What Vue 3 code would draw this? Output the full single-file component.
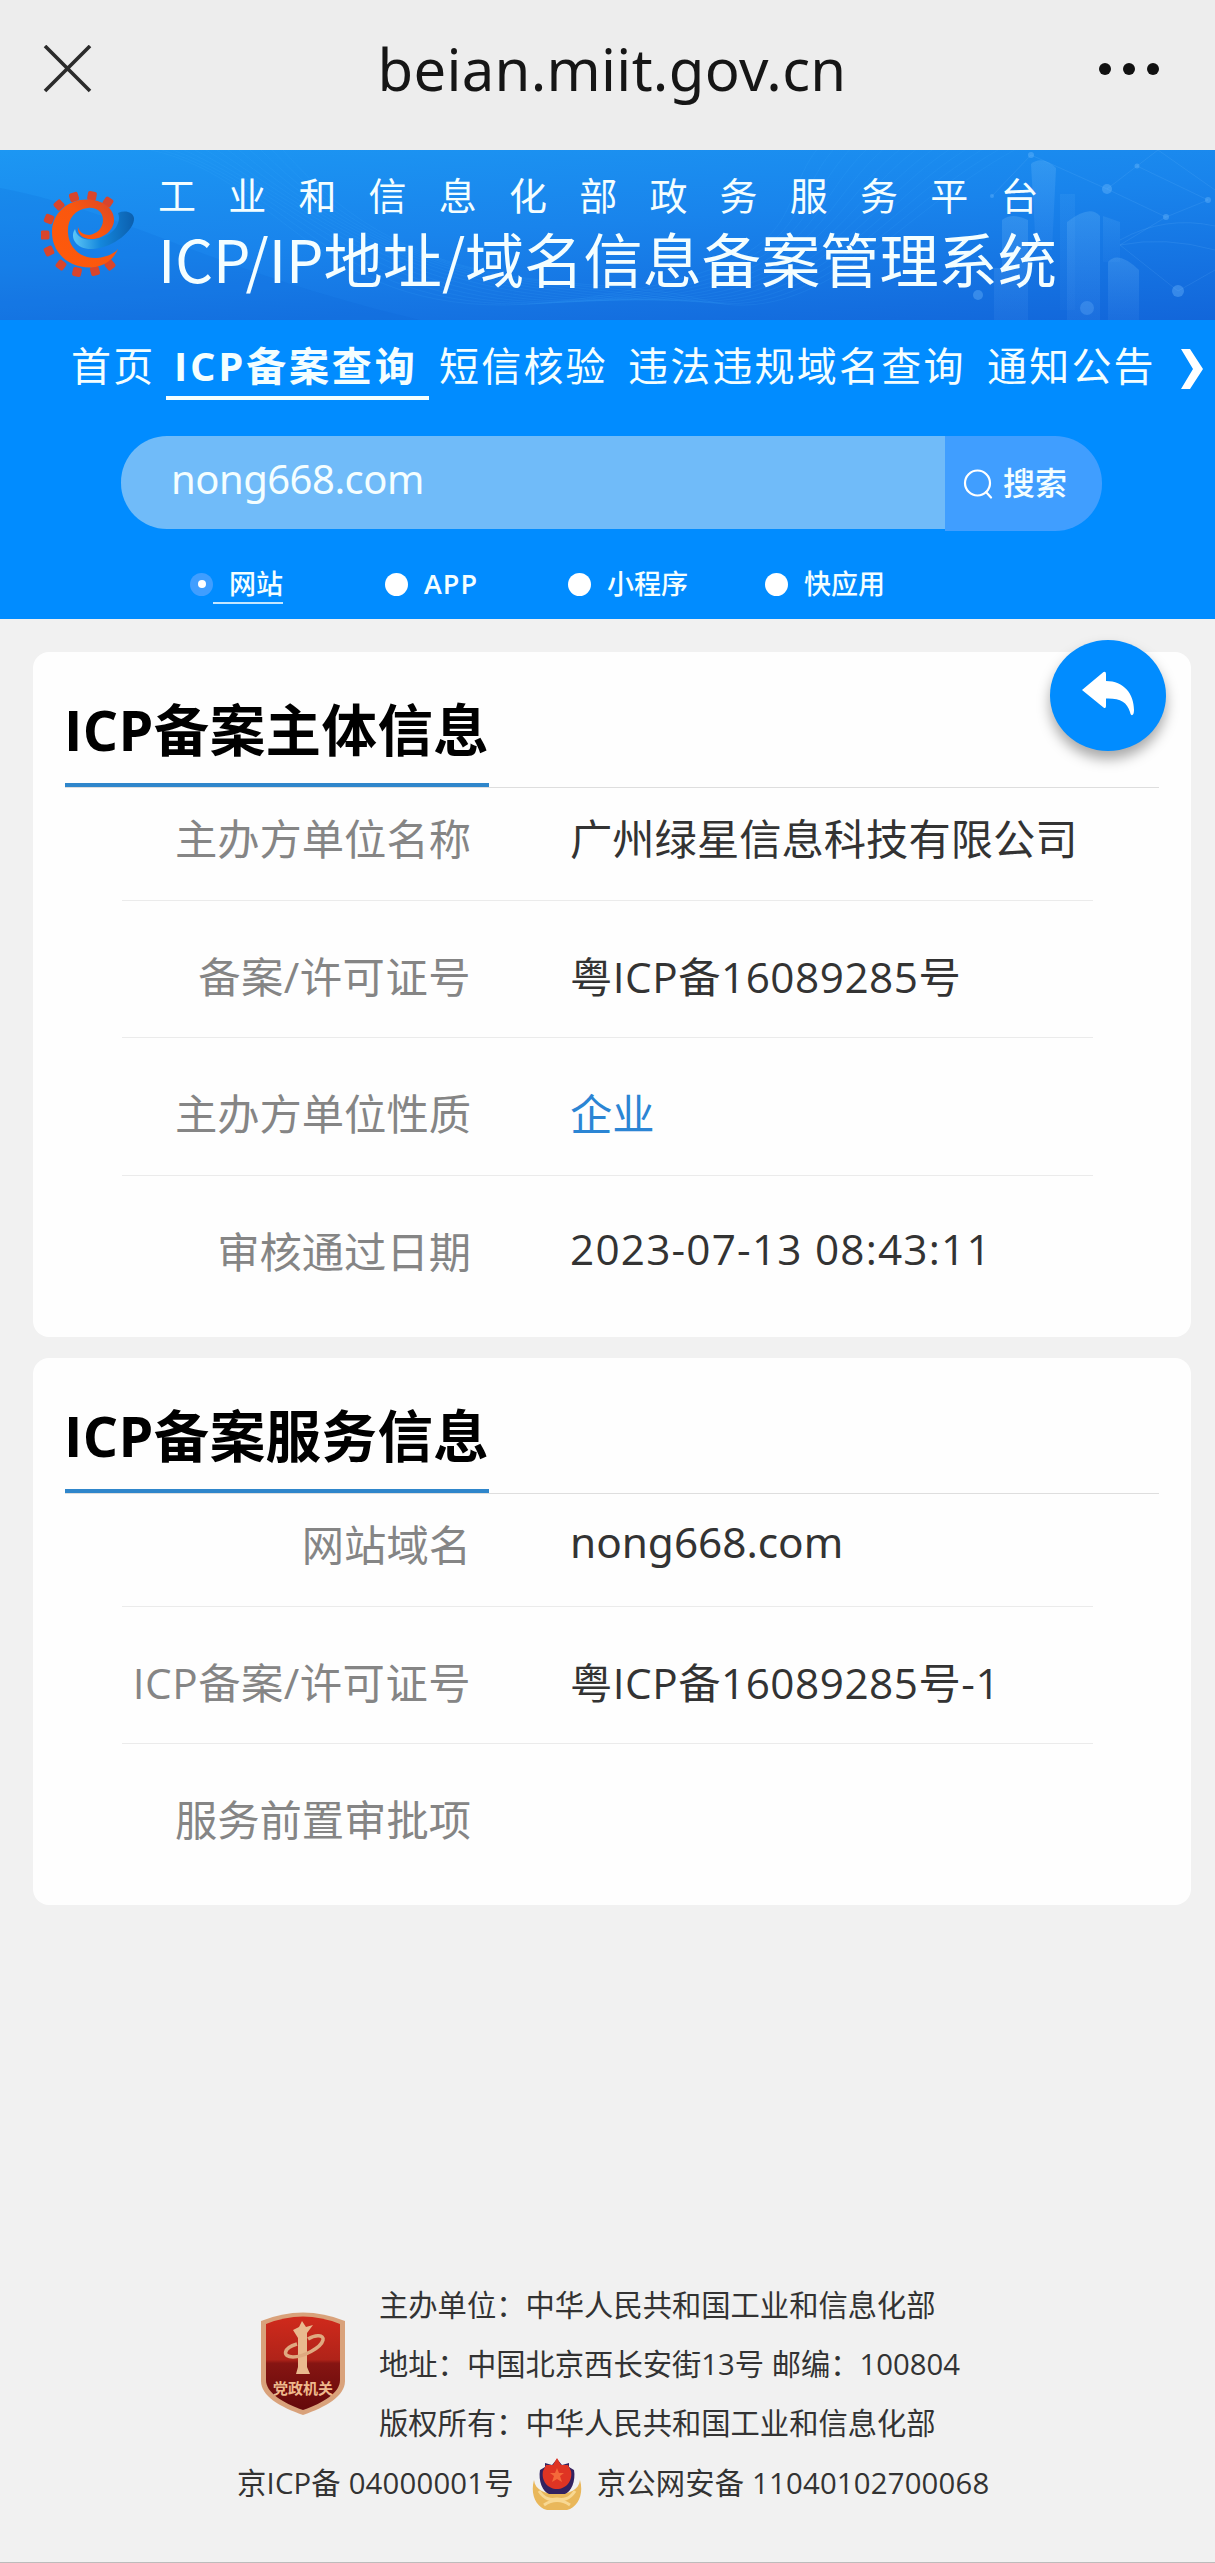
<template>
  <div class="page">
    <!-- Browser bar -->
    <header class="title-bar">
      <svg class="close-icon" width="49" height="49" viewBox="0 0 49 49" fill="none">
        <path d="M2 1L47 46M47 1L2 46" stroke="#2b2b2b" stroke-width="3.6"/>
      </svg>
      <span class="host">beian.miit.gov.cn</span>
      <svg class="more-icon" width="62" height="14" viewBox="0 0 62 14">
        <circle cx="6" cy="7" r="6" fill="#111"/>
        <circle cx="30" cy="7" r="6" fill="#111"/>
        <circle cx="54" cy="7" r="6" fill="#111"/>
      </svg>
    </header>

    <section class="banner">
      <svg class="banner-art" width="1215" height="170" viewBox="0 0 1215 170" fill="none">
        <defs>
          <linearGradient id="tower" x1="0" y1="0" x2="0" y2="1">
            <stop offset="0" stop-color="#8fd0ff" stop-opacity="0.2"/>
            <stop offset="1" stop-color="#6fb2ff" stop-opacity="0.09"/>
          </linearGradient>
        </defs>
        <path d="M0 38C120 60 210 120 420 170H0Z" fill="#0b5ed0" fill-opacity="0.12"/>
        <g stroke="#4db4ff" stroke-opacity="0.11">
          <path v-for="n in 13" :key="n" :d="wavePath(n)"/>
        </g>
        <path d="M1031 14Q1042 5 1056 18L1052 100H1036Z" fill="url(#tower)"/>
        <path d="M1002 70Q1012 62 1028 70V170H994V118H1002Z" fill="url(#tower)"/>
        <path d="M1067 72Q1090 54 1100 66V170H1067Z" fill="url(#tower)"/>
        <path d="M1103 66L1120 72V112H1103Z" fill="url(#tower)" fill-opacity="0.6"/>
        <path d="M1108 112Q1118 100 1139 120V170H1108Z" fill="url(#tower)"/>
        <path d="M1060 44H1075V160H1060Z" fill="url(#tower)" fill-opacity="0.4"/>
        <g stroke="#83c8ff" stroke-opacity="0.13">
          <path d="M992 46L1031 5L1107 39L1137 16L1208 50L1166 67L1107 39M1137 16L1158 0L1215 40M1120 90Q1165 65 1215 76M1120 95L1178 141L1215 120"/>
          <path d="M1166 67L1120 95Q1165 86 1215 100"/>
        </g>
        <g fill="#7cc0ff" fill-opacity="0.34">
          <circle cx="1031" cy="5" r="3"/>
          <circle cx="1107" cy="39" r="5"/>
          <circle cx="1137" cy="16" r="2.5"/>
          <circle cx="1208" cy="50" r="3"/>
          <circle cx="1166" cy="67" r="3"/>
          <circle cx="1178" cy="141" r="6"/>
          <circle cx="978" cy="145" r="5"/>
          <circle cx="992" cy="46" r="2"/>
          <circle cx="1087" cy="158" r="7" fill-opacity="0.25"/>
        </g>
      </svg>

      <svg class="logo" width="96" height="90" viewBox="0 0 96 90">
        <defs>
          <linearGradient id="gear" x1="0" y1="1" x2="1" y2="0">
            <stop offset="0" stop-color="#ff5a0a"/>
            <stop offset="0.6" stop-color="#f9570f"/>
            <stop offset="1" stop-color="#d8452a"/>
          </linearGradient>
          <linearGradient id="swirl" x1="0" y1="0" x2="1" y2="0">
            <stop offset="0" stop-color="#5cc6f7"/>
            <stop offset="0.45" stop-color="#1487dc"/>
            <stop offset="1" stop-color="#0b5fae"/>
          </linearGradient>
        </defs>
        <g fill="#d8452c">
          <rect v-for="tooth in teeth" :key="tooth" x="-4.5" y="-4.5" width="9" height="9" rx="2" :transform="tooth"/>
        </g>
        <path d="M34 39C28 48 36 60 52 59C72 58 94 40 93 28C92 22 84 20 77 23C81 33 72 46 56 49C44 51 36 48 34 39Z" fill="url(#swirl)"/>
        <path d="M77 59C73 69 63 77 50 77.500C28 78 11 63 11 42C11 23 27 9.500 46 9.500C62 9.500 74 19 73 31C72 42 60 50 48 49C41 48 36 44 37 37C38 42 43 45 48 45C56 44 62 38 62 30C62 21 54 17 47 18C34 19 26 29 27 43C28 59 41 69 56 68C65 67 73 64 77 59Z" fill="url(#gear)"/>
      </svg>

      <div class="banner-text">
        <p class="ministry">工业和信息化部政务服务平台</p>
        <h1 class="system">ICP/IP地址/域名信息备案管理系统</h1>
      </div>
    </section>

    <section class="query">
      <nav class="nav">
        <a
          v-for="(item, index) in navItems"
          :key="item"
          class="nav-item"
          :class="{ active: index === currentNav }"
          @click="currentNav = index"
        >{{ item }}</a>
        <svg class="nav-arrow" width="26" height="42" viewBox="0 0 26 42">
          <path d="M2 1H11L24 21L11 41H2L14 21Z" fill="#fff"/>
        </svg>
      </nav>

      <div class="search">
        <div class="search-input">{{ keyword }}</div>
        <button class="search-btn">
          <svg width="30" height="30" viewBox="0 0 30 30" fill="none">
            <circle cx="14.5" cy="14" r="12.5" stroke="#fff" stroke-width="2.2"/>
            <path d="M23 23L28 28.5" stroke="#fff" stroke-width="2.2" stroke-linecap="round"/>
          </svg>
          <span>搜索</span>
        </button>
      </div>

      <div class="types">
        <label
          v-for="(type, index) in types"
          :key="type"
          class="type"
          :class="{ checked: index === currentType }"
          @click="currentType = index"
        >
          <span class="radio"></span>
          <span class="type-name">{{ type }}</span>
        </label>
      </div>
    </section>

    <main class="content">
      <article v-for="card in cards" :key="card.title" class="card">
        <div class="card-head">
          <h2>{{ card.title }}</h2>
        </div>
        <dl class="rows">
          <div v-for="row in card.rows" :key="row.label" class="row">
            <dt :class="{ mixed: row.label.includes('/') }">{{ row.label }}</dt>
            <dd :class="row.kind">{{ row.value }}</dd>
          </div>
        </dl>
      </article>

      <button class="back-btn">
        <svg width="54" height="46" viewBox="0 0 54 46">
          <path d="M1 19L22.500 1Q25 0 25 3V10C43 10 53 23 53 39C53 45 50 46 49 41C46 31 39 27 25 27.500V35Q25 38 22.500 36.500Z" fill="#fff"/>
        </svg>
      </button>
    </main>

    <footer class="footer">
      <div class="footer-main">
        <svg class="shield" width="86" height="106" viewBox="0 0 86 106">
          <defs>
            <linearGradient id="shieldFill" x1="0" y1="0" x2="0" y2="1">
              <stop offset="0" stop-color="#d02a1c"/>
              <stop offset="0.46" stop-color="#b02319"/>
              <stop offset="0.5" stop-color="#861512"/>
              <stop offset="1" stop-color="#64090b"/>
            </linearGradient>
          </defs>
          <path d="M1 10Q43 -7 85 10V70C85 85 66 96 43 104C20 96 1 85 1 70Z" fill="#d9a27b"/>
          <path d="M6 13Q43 -2 80 13V69C80 82 63 92 43 99C23 92 6 82 6 69Z" fill="url(#shieldFill)"/>
          <path d="M39 16L42 10L46 16L53 14L47 22V56L50 63H36L38 56V27L33 19Z" fill="#e9b98e"/>
          <path d="M48 28C56 23 64 24 63 29C61 37 43 46 33 46C22 46 23 37 37 33" fill="none" stroke="#dfa980" stroke-width="3.500"/>
          <text x="43" y="83" text-anchor="middle" class="shield-text">党政机关</text>
        </svg>
        <div class="footer-lines">
          <p v-for="line in footerLines" :key="line">{{ line }}</p>
        </div>
      </div>
      <div class="footer-record">
        <span class="icp">京ICP备 04000001号</span>
        <svg class="police" width="50" height="54" viewBox="0 0 50 54">
          <path d="M2 23C3 33 13 37 25 37C37 37 47 33 48 23C52 37 46 50 35 53H15C4 50 -2 37 2 23Z" fill="#e9b75a"/>
          <path d="M7 34C13 43 19 43 25 42C31 43 37 43 43 34M12 48Q25 39 38 48" fill="none" stroke="#f8d892" stroke-width="3"/>
          <path d="M8 13L13 10V6L20 8L25 2L30 8L37 6V10L42 13C44 24 39 35 33 37H17C11 35 6 24 8 13Z" fill="#322260"/>
          <path d="M11 14L14 8L21 8L25 1L29 8L36 8L39 14C41 24 34 32 25 32C16 32 9 24 11 14Z" fill="#df3423"/>
          <path d="M25 11L27 16H32L28 19L30 25L25 22L20 25L22 19L18 16H23Z" fill="#f4683a"/>
        </svg>
        <span class="police-no">京公网安备 11040102700068</span>
      </div>
    </footer>
  </div>
</template>

<script setup>
import { ref } from 'vue'

const keyword = ref('nong668.com')
const currentNav = ref(1)
const currentType = ref(0)

const navItems = ['首页', 'ICP备案查询', '短信核验', '违法违规域名查询', '通知公告']
const types = ['网站', 'APP', '小程序', '快应用']

const cards = [
  {
    title: 'ICP备案主体信息',
    rows: [
      { label: '主办方单位名称', value: '广州绿星信息科技有限公司' },
      { label: '备案/许可证号', value: '粤ICP备16089285号', kind: 'mixed' },
      { label: '主办方单位性质', value: '企业', kind: 'link' },
      { label: '审核通过日期', value: '2023-07-13 08:43:11', kind: 'date' }
    ]
  },
  {
    title: 'ICP备案服务信息',
    rows: [
      { label: '网站域名', value: 'nong668.com', kind: 'domain' },
      { label: 'ICP备案/许可证号', value: '粤ICP备16089285号-1', kind: 'mixed' },
      { label: '服务前置审批项', value: '' }
    ]
  }
]

const footerLines = [
  '主办单位：中华人民共和国工业和信息化部',
  '地址：中国北京西长安街13号 邮编：100804',
  '版权所有：中华人民共和国工业和信息化部'
]

// Gear teeth around the open "e", the right side stays free
const toothCenters = [
  [67, 12], [51, 6], [33, 7], [18, 15], [8, 29], [4, 45],
  [8, 61], [20, 75], [36, 82], [54, 81], [69, 75]
]

const teeth = toothCenters.map(([x, y]) => {
  const angle = (Math.atan2(y - 44, x - 44) * 180) / Math.PI
  return `translate(${x} ${y}) rotate(${angle.toFixed(1)})`
})

const wavePath = (n) => {
  const s = n * 11
  return `M${140 + s} 0C${280 + s} ${20 + s} ${300 + s * 2} ${190 - s / 2} ${560 + s} 150S${760 + s} 60 ${800 + s * 1.5} 0`
}
</script>

<style>
body {
  margin: 0;
  background: #f1f1f1;
}
</style>

<style scoped>
.page {
  display: flex;
  flex-direction: column;
  width: 1215px;
  height: 2563px;
  box-sizing: border-box;
  border-bottom: 1px solid #bcbcbc;
  background: #f1f1f1;
  color: #333;
  font-family: "Open Sans", "Noto Sans CJK SC", sans-serif;
  overflow: hidden;
}

p,
h1,
h2,
dl,
dt,
dd {
  margin: 0;
}

button {
  border: none;
  padding: 0;
  font-family: inherit;
  cursor: pointer;
}

.title-bar {
  display: grid;
  grid-template-columns: 190px 1fr 170px;
  align-items: center;
  height: 150px;
  box-sizing: border-box;
  padding: 0 54px 12px 43px;
  background: #ededed;
}

.host {
  justify-self: center;
  font-family: "Noto Sans", sans-serif;
  font-size: 58px;
  line-height: 80px;
  letter-spacing: 0.3px;
  color: #161616;
}

.more-icon {
  justify-self: end;
}

.banner {
  position: relative;
  display: flex;
  height: 170px;
  box-sizing: border-box;
  padding: 0 0 0 41px;
  background: linear-gradient(176deg, #1c97f3 0%, #1984ec 45%, #1266da 100%);
}

.banner-art {
  position: absolute;
  top: 0;
  left: 0;
}

.logo {
  position: relative;
  margin-top: 40px;
  flex: none;
}

.banner-text {
  position: relative;
  margin-left: 21px;
  padding-top: 19px;
  color: #f4feff;
  font-family: "Noto Sans CJK SC", sans-serif;
  white-space: nowrap;
}

.ministry {
  font-size: 38px;
  line-height: 50px;
  letter-spacing: 32.2px;
}

.system {
  font-size: 59.2px;
  font-weight: 400;
  line-height: 77px;
}

.query {
  height: 299px;
  box-sizing: border-box;
  background: #018cff;
  color: #f4feff;
}

.nav {
  display: grid;
  grid-template-columns: 94px 274px 189px 359px 192px 30px;
  align-items: start;
  height: 116px;
  box-sizing: border-box;
  padding: 18px 0 0 71px;
  white-space: nowrap;
}

.nav-item {
  font-size: 40px;
  line-height: 56px;
  letter-spacing: 2.2px;
}

.nav-item.active {
  width: 263px;
  height: 62px;
  box-sizing: border-box;
  margin-left: 1px;
  padding-left: 8px;
  border-bottom: 4px solid #f4feff;
  font-weight: 700;
  letter-spacing: 2.8px;
}

.nav-arrow {
  margin-top: 10px;
}

.search {
  display: flex;
  align-items: flex-start;
  margin-left: 121px;
}

.search-input {
  width: 824px;
  height: 93px;
  box-sizing: border-box;
  padding-left: 50px;
  border-radius: 46px 0 0 46px;
  background: #70bbf9;
  font-family: "Noto Sans", sans-serif;
  font-size: 40px;
  letter-spacing: -0.5px;
  line-height: 85px;
}

.search-btn {
  display: flex;
  align-items: center;
  gap: 10px;
  width: 157px;
  height: 95px;
  padding-left: 18px;
  border-radius: 0 47px 47px 0;
  background: #409eff;
  color: #f4feff;
  font-size: 32px;
  font-weight: 500;
}

.search-btn span {
  margin-top: -6px;
}

.types {
  display: grid;
  grid-template-columns: 195px 183px 197px 200px;
  margin: 35px 0 0 190px;
}

.type {
  display: flex;
  align-items: center;
  font-size: 27px;
  font-weight: 500;
  line-height: 36px;
}

.type:nth-child(2) {
  font-weight: 600;
  letter-spacing: 1px;
}

.radio {
  display: flex;
  align-items: center;
  justify-content: center;
  width: 23px;
  height: 23px;
  margin-top: -2px;
  border-radius: 50%;
  background: #fff;
}

.type-name {
  padding-left: 16px;
  border-bottom: 2px solid transparent;
}

.checked .radio {
  background: #409eff;
}

.checked .radio::after {
  content: "";
  width: 8px;
  height: 8px;
  border-radius: 50%;
  background: #fff;
}

.checked .type-name {
  border-bottom-color: #c4e6ff;
}

.content {
  position: relative;
  display: flex;
  flex-direction: column;
  gap: 21px;
  padding: 33px 24px 0 33px;
}

.card {
  box-sizing: border-box;
  padding: 0 32px;
  border-radius: 16px;
  background: #fefefe;
}

.card:first-child {
  height: 685px;
}

.card:nth-child(2) {
  height: 547px;
}

.card-head {
  display: flex;
  height: 136px;
  box-sizing: border-box;
  border-bottom: 1px solid #dedede;
}

.card-head h2 {
  width: 424px;
  height: 135px;
  box-sizing: border-box;
  padding-top: 38px;
  border-bottom: 4px solid #2f86cb;
  font-size: 55.5px;
  font-weight: 700;
  line-height: 80px;
  letter-spacing: 0.4px;
  text-indent: -1px;
  color: #000;
  white-space: nowrap;
}

.rows {
  margin: 0 66px 0 57px;
}

.row {
  display: grid;
  grid-template-columns: 349px 1fr;
  column-gap: 99px;
  height: 137.4px;
  box-sizing: border-box;
  padding-top: 46px;
  border-bottom: 1.5px solid #ebebeb;
  font-size: 42.3px;
  line-height: 60px;
  white-space: nowrap;
}

.row:first-child {
  height: 113px;
  padding-top: 21px;
}

.row:last-child {
  border-bottom: none;
}

.row dt {
  text-align: right;
  color: #858585;
}

.row .mixed {
  letter-spacing: 0.5px;
}

.row .link {
  color: #2b85d4;
}

.row .date {
  margin-top: -3px;
  letter-spacing: 1.2px;
}

.row .domain {
  margin-top: -3px;
  font-family: "Noto Sans", sans-serif;
}

/* Floats over the corner of the first card */
.back-btn {
  position: absolute;
  top: 21px;
  right: 49px;
  display: flex;
  align-items: center;
  justify-content: center;
  width: 116px;
  height: 111px;
  padding-bottom: 4px;
  border-radius: 50%;
  background: #018cff;
  box-shadow: 0 8px 13px rgba(0, 0, 0, 0.34);
}

.footer {
  margin-top: auto;
  height: 286px;
  font-size: 29.3px;
}

.footer-main {
  display: flex;
  align-items: flex-start;
  gap: 33px;
  margin-left: 260px;
}

.shield {
  flex: none;
  margin-top: 35px;
}

.shield-text {
  font-family: "Noto Sans CJK SC", sans-serif;
  font-size: 15px;
  font-weight: 700;
  fill: #eeb98d;
}

.footer-lines {
  white-space: nowrap;
}

.footer-lines p {
  line-height: 59px;
}

.footer-record {
  display: flex;
  align-items: center;
  height: 57px;
  margin-left: 237px;
  letter-spacing: 0.2px;
  white-space: nowrap;
}

.police {
  flex: none;
  margin: 5px 15px 0 18px;
}
</style>
